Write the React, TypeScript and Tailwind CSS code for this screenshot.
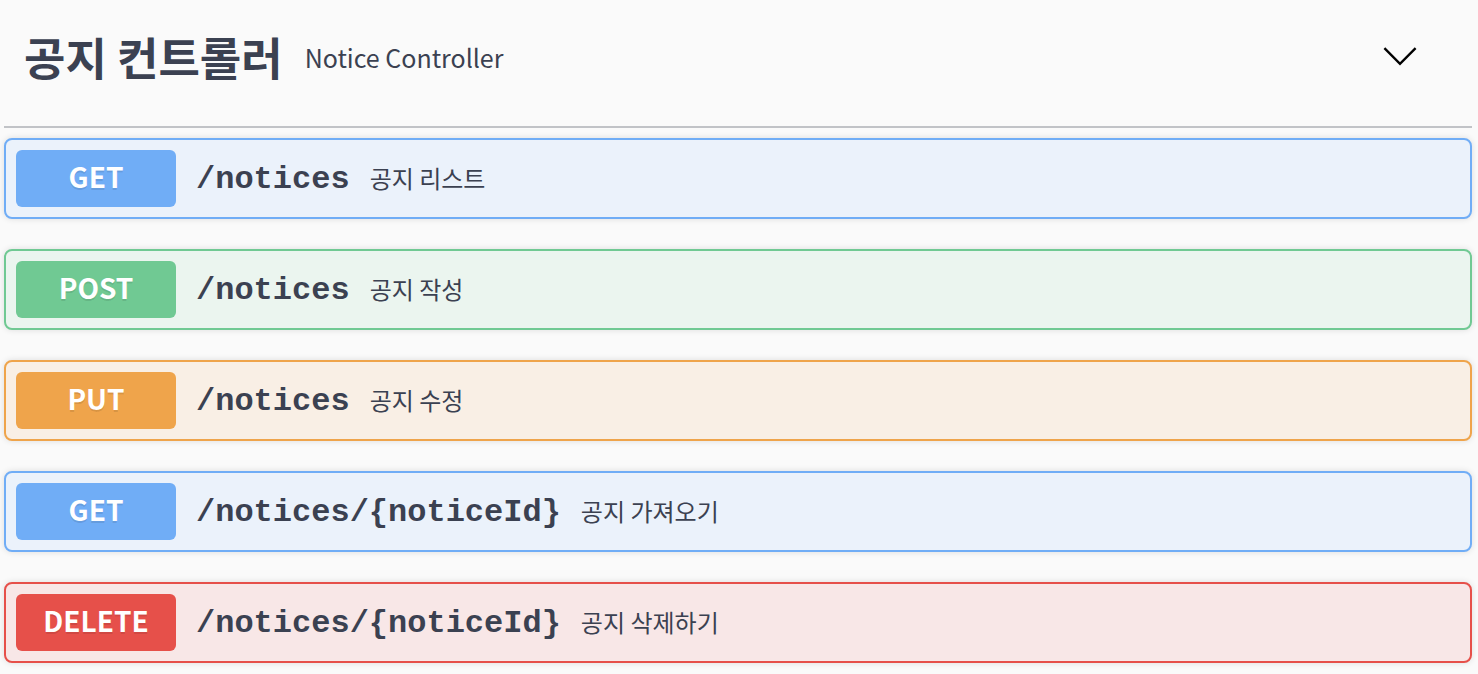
import React from 'react';

type Method = 'GET' | 'POST' | 'PUT' | 'DELETE';

const styles: Record<Method, { block: string; badge: string }> = {
  GET: { block: 'bg-[#ebf2fb] border-[#70adf6]', badge: 'bg-[#70adf6]' },
  POST: { block: 'bg-[#ebf5ef] border-[#70c993]', badge: 'bg-[#70c993]' },
  PUT: { block: 'bg-[#f9efe5] border-[#efa44b]', badge: 'bg-[#efa44b]' },
  DELETE: { block: 'bg-[#f8e7e7] border-[#e6504a]', badge: 'bg-[#e6504a]' },
};

const operations: { method: Method; path: string; summary: string }[] = [
  { method: 'GET', path: '/notices', summary: '공지 리스트' },
  { method: 'POST', path: '/notices', summary: '공지 작성' },
  { method: 'PUT', path: '/notices', summary: '공지 수정' },
  { method: 'GET', path: '/notices/{noticeId}', summary: '공지 가져오기' },
  { method: 'DELETE', path: '/notices/{noticeId}', summary: '공지 삭제하기' },
];

const sans = "font-['Noto_Sans_CJK_KR','Noto_Sans',sans-serif]";

function Operation({ method, path, summary }: { method: Method; path: string; summary: string }) {
  const s = styles[method];
  return (
    <div className={`mb-[30px] rounded-[8px] border-2 p-[10px] shadow-[0_0_6px_rgba(0,0,0,0.12)] ${s.block}`}>
      <div className="flex items-center">
        <span
          className={`flex h-[57px] w-[160px] items-center justify-center rounded-[6px] pb-[5px] text-[28px] font-bold text-white [text-shadow:0_2px_0_rgba(0,0,0,0.1)] ${sans} ${s.badge}`}
        >
          {method}
        </span>
        <span className="px-[20px] pt-[2px] font-['Liberation_Mono',monospace] text-[32px] font-bold text-[#3b4151]">
          {path}
        </span>
        <span className={`pb-[2px] text-[24px] text-[#3b4151] ${sans}`}>{summary}</span>
      </div>
    </div>
  );
}

export default function App() {
  return (
    <div className="min-h-screen bg-[#fafafa]">
      <div className="ml-[4px] mr-[6px]">
        {/* tag header */}
        <div className="flex h-[128px] items-center border-b-2 border-[#c1c3c7] pb-[10px] pl-[20px]">
          <span className={`pb-[2px] text-[45px] font-bold text-[#3b4151] ${sans}`}>공지 컨트롤러</span>
          <span className={`ml-[22px] text-[25px] text-[#3b4151] ${sans}`}>Notice Controller</span>
          <div className="flex-1" />
          <svg className="mb-[6px] mr-[52px] h-[40px] w-[40px]" viewBox="0 0 20 20" fill="none">
            <polyline points="2.2,6.6 10,14.4 17.8,6.6" stroke="#000" strokeWidth="1.2" />
          </svg>
        </div>

        <div className="pt-[10px]">
          {operations.map((op, i) => (
            <Operation key={i} {...op} />
          ))}
        </div>
      </div>
    </div>
  );
}
